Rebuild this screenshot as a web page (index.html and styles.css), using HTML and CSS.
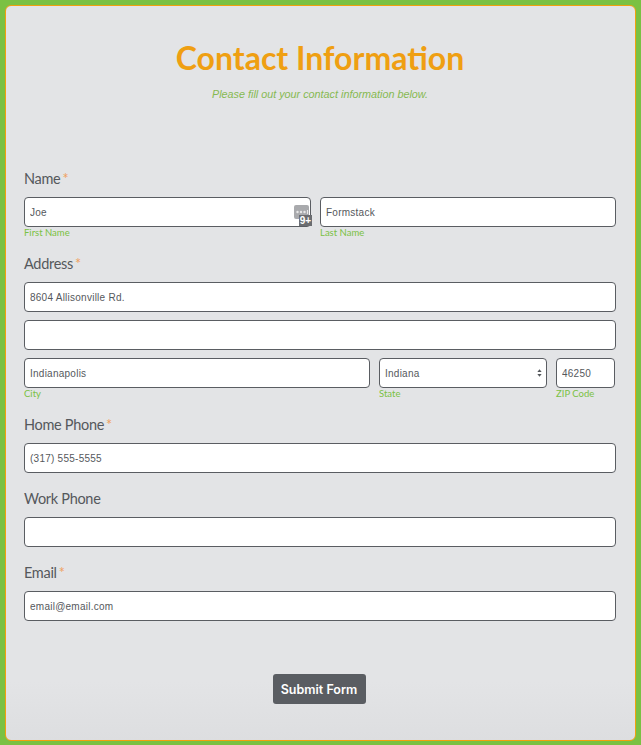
FILE: index.html
```html
<!DOCTYPE html>
<html lang="en">
<head>
  <meta charset="UTF-8">
  <meta name="viewport" content="width=device-width, initial-scale=1.0">
  <title>Contact Information</title>
  <link rel="stylesheet" href="styles.css">
</head>
<body>
  <form class="card">
    <header class="form-header">
      <h1 class="form-title">Contact Information</h1>
      <p class="form-intro">Please fill out your contact information below.</p>
    </header>

    <div class="field field-name">
      <div class="field-label">Name<span class="req">*</span></div>
      <div class="row">
        <div class="col col-half">
          <div class="input-wrap">
            <input class="input" type="text" value="Joe">
            <span class="pw-icon">
              <svg width="15" height="14" viewBox="0 0 15 14">
                <rect width="15" height="14" rx="2" fill="#a9aaad"/>
                <circle cx="3.5" cy="7" r="1.2" fill="#e8e8e8"/>
                <circle cx="7" cy="7" r="1.2" fill="#e8e8e8"/>
                <circle cx="10.5" cy="7" r="1.2" fill="#e8e8e8"/>
                <rect x="13" y="5" width="1" height="4" fill="#e8e8e8"/>
              </svg>
              <span class="pw-badge">9+</span>
            </span>
          </div>
          <div class="sub-label">First Name</div>
        </div>
        <div class="col col-half">
          <input class="input" type="text" value="Formstack">
          <div class="sub-label">Last Name</div>
        </div>
      </div>
    </div>

    <div class="field field-address">
      <div class="field-label">Address<span class="req">*</span></div>
      <input class="input stacked" type="text" value="8604 Allisonville Rd.">
      <input class="input stacked" type="text" value="">
      <div class="row">
        <div class="col col-city">
          <input class="input" type="text" value="Indianapolis">
          <div class="sub-label">City</div>
        </div>
        <div class="col col-state">
          <div class="select">
            <span>Indiana</span>
            <svg width="5" height="8" viewBox="0 0 6 9">
              <path d="M3 0 L5.6 3.4 L0.4 3.4 Z M3 9 L0.4 5.6 L5.6 5.6 Z" fill="#55585c"/>
            </svg>
          </div>
          <div class="sub-label">State</div>
        </div>
        <div class="col col-zip">
          <input class="input" type="text" value="46250">
          <div class="sub-label">ZIP Code</div>
        </div>
      </div>
    </div>

    <div class="field">
      <div class="field-label">Home Phone<span class="req">*</span></div>
      <input class="input" type="text" value="(317) 555-5555">
    </div>

    <div class="field">
      <div class="field-label">Work Phone</div>
      <input class="input" type="text" value="">
    </div>

    <div class="field">
      <div class="field-label">Email<span class="req">*</span></div>
      <input class="input" type="text" value="email@email.com">
    </div>

    <div class="actions">
      <button class="submit" type="button">Submit Form</button>
    </div>
  </form>
</body>
</html>
```

FILE: styles.css
```css
* {
  box-sizing: border-box;
}

html,
body {
  height: 100%;
}

body {
  margin: 0;
  padding: 5px 5px 4px 5px;
  background: #7ac143;
  font-family: 'Lato', sans-serif;
  overflow: hidden;
}

.card {
  height: 736px;
  width: 631px;
  padding: 0 19px 0 18px;
  border: 1px solid #f1a00f;
  border-radius: 6px;
  background: linear-gradient(to bottom, #e3e4e6 92%, #dddee0 100%);
}

.form-header {
  height: 163px;
  padding-top: 32px;
  text-align: center;
}

.form-title {
  margin: 0;
  font-size: 32px;
  line-height: 40px;
  font-weight: 700;
  color: #ef9f12;
}

.form-intro {
  margin: 9px 0 0;
  font-family: 'Liberation Sans', sans-serif;
  font-size: 10.8px;
  line-height: 14px;
  font-style: italic;
  color: #86b951;
}

.field {
  margin-bottom: 16px;
}

.field-name {
  margin-bottom: 13px;
}

.field-address {
  margin-bottom: 13px;
}

.field-label {
  height: 20px;
  margin-bottom: 8px;
  font-size: 14.5px;
  line-height: 20px;
  letter-spacing: -0.3px;
  color: #55585c;
}

.req {
  margin-left: 2px;
  color: #f0a060;
}

.row {
  display: flex;
  gap: 9px;
}

.col-half {
  flex: 0 0 287px;
}

.col-half + .col-half {
  flex-basis: 296px;
}

.col-city {
  flex: 0 0 346px;
}

.col-state {
  flex: 0 0 168px;
}

.col-zip {
  flex: 0 0 59px;
}

.input-wrap {
  position: relative;
}

.input {
  display: block;
  width: 100%;
  height: 30px;
  padding: 0 5px;
  border: 1px solid #5a5d62;
  border-radius: 4px;
  background: #fff;
  font-family: 'Liberation Sans', sans-serif;
  font-size: 10px;
  letter-spacing: 0.25px;
  color: #55585c;
  outline: none;
}

.stacked {
  margin-bottom: 8px;
}

.select {
  display: flex;
  align-items: center;
  justify-content: space-between;
  height: 30px;
  padding: 0 4px 0 5px;
  border: 1px solid #5a5d62;
  border-radius: 4px;
  background: #fff;
  font-family: 'Liberation Sans', sans-serif;
  font-size: 10px;
  letter-spacing: 0.25px;
  color: #55585c;
}

.sub-label {
  height: 14px;
  font-size: 9.5px;
  line-height: 12px;
  color: #7ac143;
}

.pw-icon {
  position: absolute;
  top: 8px;
  right: 2px;
  width: 15px;
  height: 14px;
}

.pw-icon svg {
  display: block;
}

.pw-badge {
  position: absolute;
  top: 10px;
  left: 5px;
  width: 13px;
  height: 11px;
  background: #6b6d71;
  font-family: 'Liberation Sans', sans-serif;
  font-size: 10px;
  font-weight: bold;
  line-height: 11px;
  text-align: center;
  color: #fff;
}

.actions {
  display: flex;
  justify-content: center;
  padding: 37px 2px 0 0;
}

.submit {
  width: 93px;
  height: 30px;
  padding: 0;
  border: none;
  border-radius: 3px;
  background: #5a5d62;
  font-family: 'Inter', sans-serif;
  font-size: 12.5px;
  font-weight: 600;
  color: #fff;
}
```
